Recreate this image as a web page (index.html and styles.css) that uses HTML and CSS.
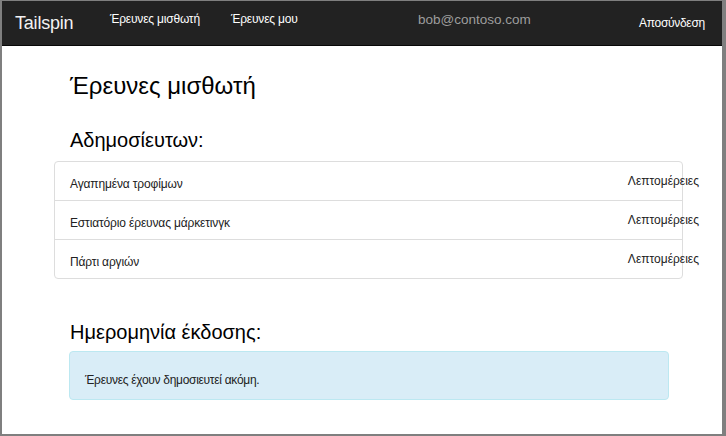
FILE: index.html
```html
<!DOCTYPE html>
<html lang="el">
<head>
<meta charset="utf-8">
<link rel="stylesheet" href="styles.css">
</head>
<body>
<div class="frame">
  <nav class="navbar">
    <a class="brand">Tailspin</a>
    <a class="nav-link first">Έρευνες μισθωτή</a>
    <a class="nav-link second">Έρευνες μου</a>
    <span class="user">bob@contoso.com</span>
    <a class="logout">Αποσύνδεση</a>
  </nav>
  <main class="main">
    <h1 class="title">Έρευνες μισθωτή</h1>
    <h2 class="section">Αδημοσίευτων:</h2>
    <ul class="list">
      <li class="row"><span class="name">Αγαπημένα τροφίμων</span><a class="details">Λεπτομέρειες</a></li>
      <li class="row"><span class="name">Εστιατόριο έρευνας μάρκετινγκ</span><a class="details">Λεπτομέρειες</a></li>
      <li class="row"><span class="name">Πάρτι αργιών</span><a class="details">Λεπτομέρειες</a></li>
    </ul>
    <h2 class="section second-section">Ημερομηνία έκδοσης:</h2>
    <div class="alert">Έρευνες έχουν δημοσιευτεί ακόμη.</div>
  </main>
</div>
</body>
</html>
```
FILE: styles.css
```css
html, body {
  margin: 0;
  padding: 0;
  width: 726px;
  height: 436px;
  overflow: hidden;
  background: #7f7f7f;
  font-family: "Liberation Sans", Arial, sans-serif;
}
.frame {
  box-sizing: border-box;
  width: 726px;
  height: 436px;
  border-style: solid;
  border-color: #7f7f7f;
  border-width: 1px 4px 2px 2px;
  background: #fff;
  display: flex;
  flex-direction: column;
}
.navbar {
  height: 44px;
  flex: none;
  background: #222;
  border-bottom: 1px solid #080808;
  position: relative;
  color: #fff;
}
.navbar a, .navbar span { position: absolute; white-space: nowrap; }
.brand {
  left: 13px;
  top: 12px;
  font-size: 18px;
  color: #f2f2f2;
  letter-spacing: -0.2px;
}
.nav-link {
  top: 11px;
  font-size: 12px;
  color: #fff;
  letter-spacing: -0.2px;
}
.nav-link.first { left: 108px; }
.nav-link.second { left: 229px; }
.user {
  left: 416px;
  top: 11px;
  font-size: 13.5px;
  color: #9d9d9d;
}
.logout {
  left: 637px;
  top: 15px;
  font-size: 12px;
  color: #fff;
  letter-spacing: -0.3px;
}
.main {
  padding: 0 0 0 52px;
  display: flex;
  flex-direction: column;
  align-items: flex-start;
}
.title {
  margin: 26px 0 0 16px;
  font-size: 24px;
  font-weight: normal;
  line-height: 28px;
  color: #000;
}
.section {
  margin: 28px 0 0 16px;
  font-size: 20px;
  font-weight: normal;
  line-height: 24px;
  color: #000;
}
.list {
  list-style: none;
  margin: 9px 0 0 0;
  padding: 0;
  width: 629px;
  box-sizing: border-box;
  border: 1px solid #ddd;
  border-radius: 4px;
}
.row {
  height: 38px;
  box-sizing: border-box;
  display: flex;
  justify-content: space-between;
  align-items: flex-start;
  padding: 0 0 0 15px;
  font-size: 12px;
  color: #222;
}
.row + .row { border-top: 1px solid #ddd; height: 39px; }
.name { margin-top: 15px; letter-spacing: -0.15px; }
.details {
  margin-top: 12px;
  margin-right: -17px;
  color: #222;
  letter-spacing: 0;
}
.second-section { margin-top: 41px; }
.alert {
  margin: 7px 0 0 15px;
  width: 600px;
  height: 49px;
  box-sizing: border-box;
  background: #d9edf7;
  border: 1px solid #bce8f1;
  border-radius: 4px;
  padding: 21px 0 0 15px;
  font-size: 12px;
  color: #222;
  letter-spacing: -0.3px;
}
```
